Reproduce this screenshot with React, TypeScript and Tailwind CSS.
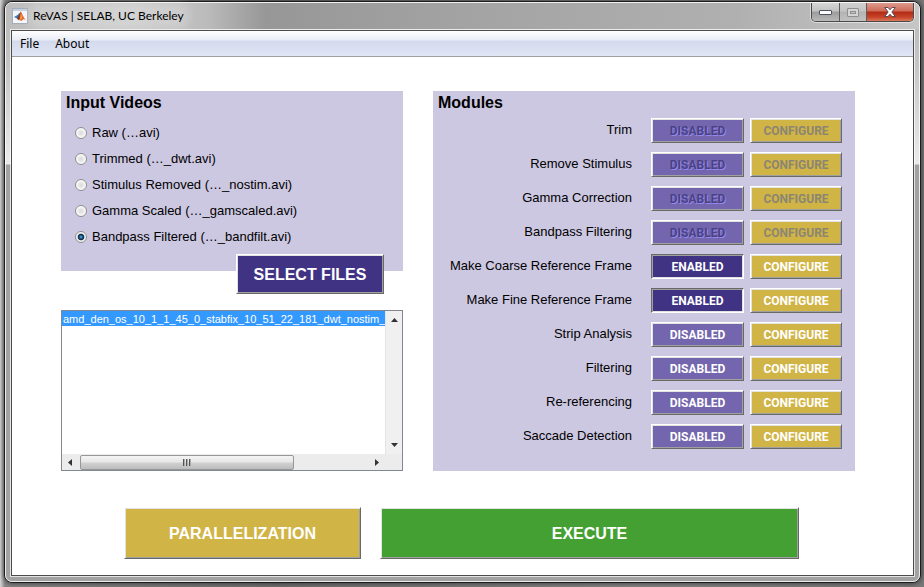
import React from "react";

const sources = [
  "Raw (…avi)",
  "Trimmed (…_dwt.avi)",
  "Stimulus Removed (…_nostim.avi)",
  "Gamma Scaled (…_gamscaled.avi)",
  "Bandpass Filtered (…_bandfilt.avi)",
];

type ModuleState = "locked" | "on" | "off";

const modules: { name: string; state: ModuleState }[] = [
  { name: "Trim", state: "locked" },
  { name: "Remove Stimulus", state: "locked" },
  { name: "Gamma Correction", state: "locked" },
  { name: "Bandpass Filtering", state: "locked" },
  { name: "Make Coarse Reference Frame", state: "on" },
  { name: "Make Fine Reference Frame", state: "on" },
  { name: "Strip Analysis", state: "off" },
  { name: "Filtering", state: "off" },
  { name: "Re-referencing", state: "off" },
  { name: "Saccade Detection", state: "off" },
];

const raised =
  "border border-t-white border-l-white border-r-[#696969] border-b-[#696969] shadow-[inset_1px_1px_0_#e3e3e3,inset_-1px_-1px_0_#a0a0a0]";
const sunken =
  "border border-t-[#696969] border-l-[#696969] border-r-white border-b-white shadow-[inset_1px_1px_0_#a0a0a0,inset_-1px_-1px_0_#e3e3e3]";

const toggleStyle: Record<ModuleState, string> = {
  locked: `${raised} bg-[#7366ae] text-[#4b4283] [text-shadow:1px_1px_0_#9389ee]`,
  on: `${sunken} bg-[#413384] text-white`,
  off: `${raised} bg-[#7366ae] text-white`,
};

function Logo() {
  return (
    <svg width="16" height="16" viewBox="0 0 16 16" aria-hidden="true">
      <rect x="0.5" y="0.5" width="15" height="15" fill="#f4f6f9" stroke="#a3adb8" />
      <rect x="1" y="1" width="14" height="2" fill="#c5d0dc" />
      <path d="M2 9 L5.5 7 L8 4.5 L8 9 L6 11.5 L4.5 10.2 Z" fill="#3f78b4" />
      <path d="M5 10.5 L7 7 L9 3.5 L9 9 L7 12.5 Z" fill="#8d3a25" />
      <path d="M8.8 3.2 C10 4.5 11 9 13.8 12 C12 11 11 11 9.5 13 L7.5 12 Z" fill="#e8672a" />
      <path d="M9 5 L10 10 L8 12 Z" fill="#f6b04a" />
    </svg>
  );
}

function TitleBar() {
  return (
    <header className="flex h-[26px] items-start rounded-t-md bg-[linear-gradient(to_right,#bdbdbd_0,#c9c9c9_120px,#bcbcbc_200px,#979797_260px,#a3a3a3_50%,#b0b0b0_80%,#c6c6c6_100%)]">
      <div className="flex h-[26px] flex-1 items-center gap-[5px] pl-[6px]">
        <Logo />
        <h1 className="rounded-full bg-white/20 font-['Lato','Open_Sans',sans-serif] text-[12px] leading-4 text-black shadow-[0_0_8px_6px_rgba(255,255,255,0.2)]">
          ReVAS | SELAB, UC Berkeley
        </h1>
      </div>
      <div className="mr-[5px] flex h-[19px] overflow-hidden rounded-b-[5px] border border-t-0 border-[#4a4a4a] shadow-[0_0_0_1px_rgba(255,255,255,0.5)]">
        <button
          aria-label="Minimize"
          className="flex w-[28px] items-center justify-center border-r border-[#5c5c5c] bg-[linear-gradient(#d6d6d6_0,#c2c2c2_45%,#9b9b9b_50%,#b9b9b9_100%)]"
        >
          <svg width="13" height="5" viewBox="0 0 13 5" aria-hidden="true">
            <rect x="0.5" y="0.5" width="12" height="4" rx="0.5" fill="#fff" stroke="#4d5363" />
          </svg>
        </button>
        <button
          aria-label="Maximize"
          disabled
          className="flex w-[27px] items-center justify-center border-r border-[#5c5c5c] bg-[linear-gradient(#cfcfcf_0,#c4c4c4_45%,#b3b3b3_50%,#c2c2c2_100%)]"
        >
          <svg width="12" height="9" viewBox="0 0 12 9" aria-hidden="true">
            <rect x="0.5" y="0.5" width="11" height="8" rx="0.5" fill="#d4d4d4" stroke="#8f8f8f" />
            <rect x="3.5" y="3.5" width="5" height="2" fill="#c4c4c4" stroke="#8f8f8f" />
          </svg>
        </button>
        <button
          aria-label="Close"
          className="flex w-[46px] items-center justify-center bg-[linear-gradient(#dd9a8e_0,#cf6a58_45%,#b22a12_50%,#c8452b_80%,#da7a5c_100%)]"
        >
          <svg width="12" height="10" viewBox="0 0 12 10" aria-hidden="true">
            <path
              d="M0.8 0.5 H4 L6 2.8 L8 0.5 H11.2 L7.9 5 L11.2 9.5 H8 L6 7.2 L4 9.5 H0.8 L4.1 5 Z"
              fill="#fff"
              stroke="#4d4456"
              strokeWidth="0.9"
            />
          </svg>
        </button>
      </div>
    </header>
  );
}

function MenuBar() {
  return (
    <nav className="flex h-[26px] items-center gap-4 border-b border-[#a0a0a0] bg-[linear-gradient(#ffffff_0,#e9edf7_9px,#d3daec_10px,#e1e6f6_25px)] pl-2 font-['Noto_Sans','Open_Sans',sans-serif] text-[12px] leading-4 text-black">
      <button>File</button>
      <button>About</button>
    </nav>
  );
}

function InputVideos() {
  return (
    <fieldset className="h-[180px] min-w-0 bg-[#cdc8e2] px-[5px] pt-[2px]">
      <legend className="float-left w-full text-[16px] leading-5 font-bold">Input Videos</legend>
      <div className="clear-both flex flex-col gap-[6px] pt-[10px] pl-[9px]">
        {sources.map((label, i) => (
          <label key={label} className="flex h-5 items-center gap-[5px] text-[13px] leading-5">
            <input
              type="radio"
              name="source"
              defaultChecked={i === sources.length - 1}
              className="size-3 appearance-none rounded-full border border-[#8e8f8f] bg-[radial-gradient(circle,#dcdcdc_0,#e6e6e6_30%,#fafafa_65%)] checked:bg-[radial-gradient(circle,#55b8e6_0,#15527f_25%,#0d2742_40%,#e8e8e8_52%,#f6f6f6_70%)]"
            />
            {label}
          </label>
        ))}
      </div>
    </fieldset>
  );
}

function FileList() {
  return (
    <div className="flex flex-1 flex-col border border-[#828790] bg-white">
      <div className="flex min-h-0 flex-1">
        <select
          size={8}
          aria-label="Selected files"
          defaultValue="clip"
          className="h-[143px] min-w-0 flex-1 appearance-none overflow-hidden bg-white text-[11px] outline-none"
        >
          <option
            value="clip"
            className="h-[15px] overflow-hidden px-px pt-[2px] pb-0 text-[11px] text-white checked:bg-[linear-gradient(#3399ff,#3399ff)] checked:text-white"
          >
            amd_den_os_10_1_1_45_0_stabfix_10_51_22_181_dwt_nostim_gamscaled_bandfilt.avi
          </option>
        </select>
        <div className="flex w-[17px] flex-col items-center justify-between border-l border-[#e4e4e4] bg-[#f0f0f0] py-[7px]">
          <svg width="7" height="4" viewBox="0 0 7 4" aria-hidden="true">
            <path d="M0 4 L3.5 0 L7 4 Z" fill="#333" />
          </svg>
          <svg width="7" height="4" viewBox="0 0 7 4" aria-hidden="true">
            <path d="M0 0 L3.5 4 L7 0 Z" fill="#333" />
          </svg>
        </div>
      </div>
      <div className="flex h-4 items-center bg-[#ececec] pr-[23px] pl-[6px]">
        <svg width="4" height="7" viewBox="0 0 4 7" aria-hidden="true">
          <path d="M4 0 L0 3.5 L4 7 Z" fill="#333" />
        </svg>
        <div className="ml-2 flex h-[15px] w-[214px] items-center justify-center gap-px rounded-[2px] border border-[#979797] bg-[linear-gradient(#f5f5f5_0,#e6e6e6_48%,#d2d2d2_52%,#bcbcbc_100%)]">
          <span className="h-[7px] w-[2px] border-l border-[#555] bg-[#aaa]" />
          <span className="h-[7px] w-[2px] border-l border-[#555] bg-[#aaa]" />
          <span className="h-[7px] w-[2px] border-l border-[#555] bg-[#aaa]" />
        </div>
        <svg className="ml-auto" width="4" height="7" viewBox="0 0 4 7" aria-hidden="true">
          <path d="M0 0 L4 3.5 L0 7 Z" fill="#333" />
        </svg>
      </div>
    </div>
  );
}

function Modules() {
  return (
    <section className="bg-[#cdc8e2] px-[5px] pt-[2px] pb-[22px]">
      <h2 className="text-[16px] leading-5 font-bold">Modules</h2>
      <ul className="flex flex-col gap-[9px] pt-[5px] pr-2">
        {modules.map((m) => (
          <li key={m.name} className="flex h-[25px] font-['Roboto',sans-serif] text-[12px] leading-4 font-bold">
            <span className="mr-[19px] flex-1 text-right font-['Liberation_Sans',Arial,sans-serif] text-[13px] leading-6 font-normal">
              {m.name}
            </span>
            <button
              disabled={m.state === "locked"}
              aria-label={`${m.name}: ${m.state === "on" ? "enabled" : "disabled"}`}
              className={`mr-[6px] w-[93px] ${toggleStyle[m.state]}`}
            >
              {m.state === "on" ? "ENABLED" : "DISABLED"}
            </button>
            <button
              disabled={m.state === "locked"}
              className={`w-[92px] bg-[#d1b446] ${raised} ${m.state === "locked" ? "text-[#8b8672]" : "text-white"}`}
            >
              CONFIGURE
            </button>
          </li>
        ))}
      </ul>
    </section>
  );
}

export default function App() {
  return (
    <div className="flex min-h-screen flex-col bg-[linear-gradient(to_right,#d8d8d8_0,#858585_5px,#6f6f6f_30%,#858585_70%,#777_100%)] pt-px pr-[3px] pb-1 pl-1 font-['Liberation_Sans',Arial,sans-serif] text-black">
      <div className="flex flex-1 flex-col rounded-lg border border-[#1c1c1c] bg-[linear-gradient(#b8b8b8_0,#c4c4c4_60px,#ebebeb_162px,#a2a2a2_163px)] shadow-[0_0_4px_1px_rgba(0,0,0,0.45)]">
        <div className="flex flex-1 flex-col rounded-[7px] border border-white/80 px-1 pb-1">
          <div className="-mx-1">
            <TitleBar />
          </div>
          <div className="flex flex-1 flex-col border border-white/70">
            <div className="flex flex-1 flex-col border border-[#4c4c4c] bg-white">
              <MenuBar />
              <main className="flex flex-1 flex-col pt-[34px]">
                <div className="grid grid-cols-[minmax(0,342fr)_minmax(0,422fr)] gap-[30px] pr-[58px] pl-[49px]">
                  <div className="flex flex-col">
                    <InputVideos />
                    <button
                      className={`relative -mt-[17px] mr-[19px] mb-4 h-10 w-[148px] self-end bg-[#413384] pt-[2px] text-[16px] leading-5 font-bold text-white ${raised}`}
                    >
                      SELECT FILES
                    </button>
                    <FileList />
                  </div>
                  <Modules />
                </div>
                <div className="grid grid-cols-[minmax(0,237fr)_minmax(0,419fr)] gap-[19px] pt-9 pr-[114px] pb-4 pl-[112px] text-[16px] leading-5 font-bold text-white">
                  <button className={`h-[52px] bg-[#d1b446] pt-[2px] ${raised}`}>PARALLELIZATION</button>
                  <button className={`h-[52px] bg-[#45a033] pt-[2px] ${raised}`}>EXECUTE</button>
                </div>
              </main>
            </div>
          </div>
        </div>
      </div>
    </div>
  );
}
